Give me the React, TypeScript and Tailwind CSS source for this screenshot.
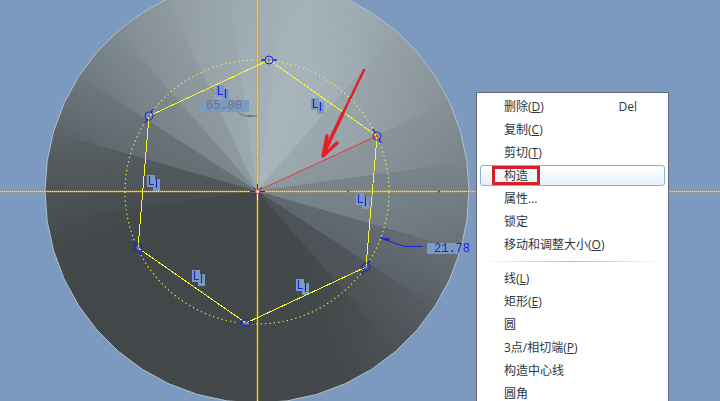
import React from "react";

// Centre and size of the shaded disc on the sketch plane
const CX = 257;
const CY = 191;
const RADIUS = 212;

// Shade along the rim, angles go clockwise from the left
const rimStops: [number, number[]][] = [
  [0, [78, 84, 88]],
  [16, [92, 100, 105]],
  [33, [110, 121, 127]],
  [49, [128, 140, 145]],
  [65, [143, 155, 161]],
  [82, [156, 168, 175]],
  [105, [165, 178, 185]],
  [120, [158, 171, 178]],
  [135, [147, 158, 164]],
  [150, [137, 148, 154]],
  [165, [126, 137, 142]],
  [180, [116, 127, 132]],
  [196, [104, 113, 119]],
  [213, [88, 95, 101]],
  [229, [76, 82, 86]],
  [245, [68, 73, 76]],
  [260, [67, 72, 74]],
  [342, [67, 72, 74]],
  [360, [78, 84, 88]],
];

// Flat shade of each facet, it fades out towards the rim
const facets: [number, number, string][] = [
  [-8, 0, "#484d51"],
  [0, 16, "#50565a"],
  [16, 33, "#667075"],
  [33, 49, "#7d888e"],
  [49, 65, "#8d999f"],
  [65, 82, "#9ba8ae"],
  [82, 98, "#a3b0b7"],
  [98, 131, "#a8b5bc"],
  [131, 155, "#9ca9b0"],
  [155, 172, "#8d989e"],
  [172, 196, "#79848a"],
  [196, 213, "#5f686e"],
  [213, 229, "#4d5358"],
  [229, 352, "#43484a"],
];

const vertices = [
  [269, 60],
  [377, 136],
  [366, 267],
  [246, 323],
  [138, 248],
  [149, 116],
];

const constraints = [
  [216, 85],
  [311, 98],
  [147, 175],
  [356, 193],
  [192, 270],
  [296, 279],
];

const onRim = (angle: number) => {
  const rad = ((angle + 180) * Math.PI) / 180;
  return [CX + RADIUS * Math.cos(rad), CY + RADIUS * Math.sin(rad)];
};

const wedge = (from: number, to: number) => {
  const [x1, y1] = onRim(from);
  const [x2, y2] = onRim(to);
  return `M${CX} ${CY}L${x1} ${y1}A${RADIUS} ${RADIUS} 0 0 1 ${x2} ${y2}Z`;
};

const rimColor = (angle: number) => {
  const next = Math.max(1, rimStops.findIndex(([a]) => a >= angle));
  const [a1, c1] = rimStops[next - 1];
  const [a2, c2] = rimStops[next];
  const t = (angle - a1) / (a2 - a1);
  return `rgb(${c1.map((c, i) => Math.round(c + (c2[i] - c) * t)).join(",")})`;
};

const rim = Array.from({ length: 44 }, (_, i) => onRim((i * 360) / 44).join(",")).join(" ");

const Disc = () => (
  <g>
    <defs>
      <clipPath id="rim">
        <polygon points={rim} />
      </clipPath>
      <radialGradient id="fade" gradientUnits="userSpaceOnUse" cx={CX} cy={CY} r={RADIUS}>
        <stop offset="0" stopColor="#fff" />
        <stop offset="0.5" stopColor="#ccc" />
        <stop offset="1" stopColor="#000" />
      </radialGradient>
      <mask id="inner" maskUnits="userSpaceOnUse" x="0" y="-40" width="720" height="480">
        <rect x="0" y="-40" width="720" height="480" fill="url(#fade)" />
      </mask>
    </defs>
    <polygon points={rim} fill="#43484a" />
    <g clipPath="url(#rim)">
      {Array.from({ length: 180 }, (_, i) => (
        <path key={i} d={wedge(i * 2, i * 2 + 2.5)} fill={rimColor(i * 2 + 1)} />
      ))}
      <g mask="url(#inner)">
        {facets.map(([from, to, color]) => (
          <path key={from} d={wedge(from, to + 0.2)} fill={color} />
        ))}
      </g>
    </g>
    <polygon points={rim} fill="none" stroke="#b4c2cc" strokeWidth="1" />
  </g>
);

/* Equal length constraint marker */
const Constraint = ({ x, y }: { x: number; y: number }) => (
  <g transform={`translate(${x} ${y})`}>
    <path d="M0 0h8v4h5v12h-7v-4h-6z" fill="#7b9ac0" />
    <path d="M2.500 1v8.500h4.500M9.500 4v9" fill="none" stroke="#1b23d6" strokeWidth="1.200" />
  </g>
);

const Sketch = () => (
  <svg
    className="absolute left-0 top-0"
    width="720"
    height="401"
    viewBox="0 0 720 401"
    role="img"
    aria-label="草绘"
  >
    <Disc />

    {/* centre lines */}
    <g fill="none">
      <path d="M0 191.500H720M257.500 0V401" stroke="#d8a41c" strokeWidth="1.600" />
      <path d="M0 191.500H720" stroke="#ffee38" strokeDasharray="1 1" />
      <path d="M257.500 0V401" stroke="#ffee38" strokeDasharray="1 1" />
    </g>
    <circle cx="257" cy="192" r="132" fill="none" stroke="#f6f43e" strokeWidth="1.200" strokeDasharray="1.200 3.200" />
    <circle cx="348" cy="191.500" r="1" fill="#3d50c8" />
    <circle cx="439" cy="191.500" r="1.200" fill="#3d50c8" />

    {/* reference dimensions */}
    <rect x="199" y="100" width="50" height="12" fill="#7b9ac0" />
    <text x="206" y="109" fontSize="12" fontFamily="'Liberation Mono', monospace" fill="#6b7580">
      65.00
    </text>
    <path d="M211 88l4 7M238 113l8 3h11M248 115l5 1-5 1z" fill="none" stroke="#6b7378" />
    <rect x="427" y="243" width="35" height="11" fill="#7b9ac0" />
    <text x="434" y="252" fontSize="12" fontFamily="'Liberation Mono', monospace" fill="#1b23d6">
      21.78
    </text>
    <path d="M381 238l23 8.500h19" fill="none" stroke="#1b23d6" />
    <path d="M381 238l8 1v2z" fill="#1b23d6" stroke="#1b23d6" />

    {constraints.map(([x, y]) => (
      <Constraint key={`${x}-${y}`} x={x} y={y} />
    ))}

    <polygon points={vertices.join(" ")} fill="none" stroke="#f7f52c" strokeWidth="1" shapeRendering="crispEdges" />
    <path d="M257 191L377 136" stroke="#ee3a3c" strokeWidth="1" />

    {vertices.map(([x, y], i) => (
      <g key={i} transform={`translate(${x} ${y}) rotate(${i * 60})`} fill="none" stroke="#1b23c8">
        <circle r="4" strokeWidth="1" />
        <circle r="1.500" fill={i === 1 ? "#e8484c" : "#4d83d8"} stroke="none" />
        <path d="M-8 0h4M4 0h4" strokeWidth="1.300" />
      </g>
    ))}
    <path d="M257.500 184v15M250 191.500h15M253 187l9 9M262 187l-9 9" stroke="#1b23c8" fill="none" />
    <path d="M257.500 194v6" stroke="#fff" />
    <circle cx="257.500" cy="191.500" r="2" fill="#f8d0c8" stroke="#ee4a44" />

    {/* hand drawn arrow */}
    <g fill="none" stroke="#e41f26" strokeLinecap="round" strokeLinejoin="round">
      <path d="M364 70L343 113" strokeWidth="2.500" />
      <path d="M343 113L323 155M327 136l-4 20 14-13" strokeWidth="3.500" />
    </g>
  </svg>
);

type Item = { label: string; hotkey?: string; shortcut?: string; active?: boolean };

const editItems: Item[] = [
  { label: "删除", hotkey: "D", shortcut: "Del" },
  { label: "复制", hotkey: "C" },
  { label: "剪切", hotkey: "T" },
  { label: "构造", active: true },
  { label: "属性..." },
  { label: "锁定" },
  { label: "移动和调整大小", hotkey: "O" },
];

const drawItems: Item[] = [
  { label: "线", hotkey: "L" },
  { label: "矩形", hotkey: "E" },
  { label: "圆" },
  { label: "3点/相切端", hotkey: "P" },
  { label: "构造中心线" },
  { label: "圆角" },
];

const MenuItem = ({ label, hotkey, shortcut, active }: Item) => (
  <button
    type="button"
    role="menuitem"
    className="relative flex h-[23px] w-full items-center pl-6 pr-7 text-left"
  >
    {active && (
      <>
        <span className="absolute inset-x-0 inset-y-px rounded-[3px] border border-[#85b4cc] bg-linear-to-b from-white to-[#e4f0fa]" />
        <span className="absolute left-3 top-0.5 h-[19px] w-12 border-3 border-[#d8202a]" />
      </>
    )}
    <span className="relative flex-1">
      {label}
      {hotkey && (
        <>
          (<u className="underline-offset-1">{hotkey}</u>)
        </>
      )}
    </span>
    {shortcut && <span>{shortcut}</span>}
  </button>
);

export default function App() {
  return (
    <main className="relative h-screen overflow-hidden bg-[#7c9abf]">
      <Sketch />
      <div
        role="menu"
        className="absolute left-[476px] top-[92px] w-[193px] border border-[#5f6b78] bg-white px-[3px] py-[2px] font-['Open_Sans','Noto_Sans_CJK_SC',sans-serif] text-xs text-[#2b3640]"
      >
        {editItems.map((item) => (
          <MenuItem key={item.label} {...item} />
        ))}
        <hr className="my-[5px] h-px border-0 bg-linear-to-r from-white via-[#b4bcbf] to-white" />
        {drawItems.map((item) => (
          <MenuItem key={item.label} {...item} />
        ))}
      </div>
    </main>
  );
}
